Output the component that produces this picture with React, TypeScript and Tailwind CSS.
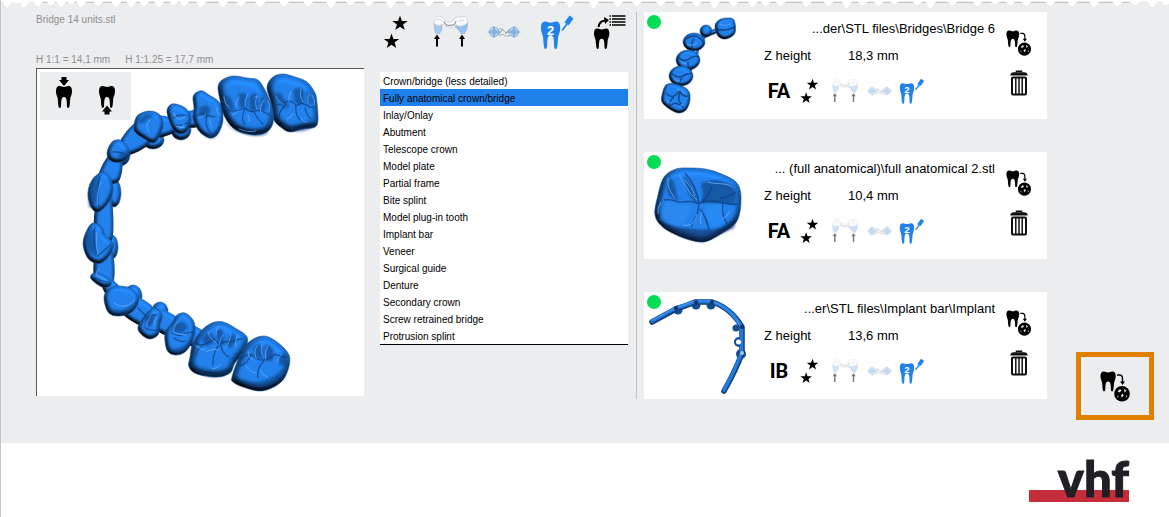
import { useState, type ReactNode } from "react";

type Pt = [number, number];

function smooth(points: Pt[]): string {
  const n = points.length;
  let d = `M${points[0][0]} ${points[0][1]}`;
  for (let i = 0; i < n; i++) {
    const a = points[(i - 1 + n) % n];
    const b = points[i];
    const c = points[(i + 1) % n];
    const e = points[(i + 2) % n];
    d += `C${b[0] + (c[0] - a[0]) / 6} ${b[1] + (c[1] - a[1]) / 6} ${c[0] - (e[0] - b[0]) / 6} ${c[1] - (e[1] - b[1]) / 6} ${c[0]} ${c[1]}`;
  }
  return d + "Z";
}

function ellipse(cx: number, cy: number, rx: number, ry: number): Pt[] {
  return Array.from({ length: 8 }, (_, i): Pt => {
    const t = (i * Math.PI) / 4;
    return [cx + rx * Math.cos(t), cy + ry * Math.sin(t)];
  });
}

function Lighting({ id, soft }: { id: string; soft: number }) {
  return (
    <>
      <filter id={id} x="-10%" y="-10%" width="120%" height="120%" colorInterpolationFilters="sRGB">
        <feGaussianBlur in="SourceAlpha" stdDeviation={soft} result="b" />
        <feDiffuseLighting in="b" surfaceScale={soft * 2.4} diffuseConstant="1.1" lightingColor="#2282ef" result="l">
          <feDistantLight azimuth="290" elevation="64" />
        </feDiffuseLighting>
        <feComposite in="l" in2="SourceAlpha" operator="in" />
      </filter>
      <filter id={`${id}-haze`} x="-5%" y="-5%" width="110%" height="110%">
        <feGaussianBlur stdDeviation="0.9" />
      </filter>
      <filter id={`${id}-soft`} x="-5%" y="-5%" width="110%" height="110%">
        <feGaussianBlur stdDeviation="0.45" />
      </filter>
    </>
  );
}

function Blobs({ shapes, filter }: { shapes: Pt[][]; filter: string }) {
  return (
    <g stroke="#17529d" strokeWidth="0.6">
      {shapes.map((s, i) => (
        <g key={i}>
          <path d={smooth(s)} fill="#2484f2" stroke="none" filter={`url(#${filter})`} />
          <path d={smooth(s)} fill="none" />
        </g>
      ))}
    </g>
  );
}

const archConnectors: Pt[][] = [
  [[150, 117], [172, 118], [178, 130], [156, 137]],
  [[138, 122], [120, 142], [128, 155], [150, 142]],
  [[109, 155], [122, 160], [118, 182], [98, 180]],
  [[97, 200], [111, 196], [112, 240], [95, 234]],
  [[96, 252], [112, 250], [113, 284], [95, 281]],
  [[104, 274], [122, 290], [112, 302], [101, 284]],
  [[126, 293], [154, 308], [149, 328], [122, 313]],
  [[158, 309], [180, 320], [174, 337], [153, 327]],
  [[185, 324], [204, 332], [198, 347], [185, 341]],
  [[182, 114], [200, 110], [200, 126], [182, 126]],
];

const archBack: Pt[][] = [
  ellipse(153, 140, 11, 9),
  ellipse(181, 130, 10, 10),
  ellipse(114, 193, 7, 14),
  ellipse(112, 247, 6, 12),
  ellipse(133, 296, 9, 11),
  ellipse(160, 311, 8, 9),
  ellipse(120, 155, 10, 11),
];

const archFront: Pt[][] = [
  [[193, 97], [197, 92], [203, 91], [209, 95], [217, 100], [222, 107], [223, 117], [222, 125], [217, 135], [210, 138], [202, 134], [197, 128], [193, 118], [194, 108]],
  [[167, 110], [172, 104], [182, 106], [189, 112], [191, 121], [187, 131], [180, 134], [173, 129], [169, 120]],
  [[134, 125], [138, 115], [150, 111], [160, 115], [163, 125], [159, 137], [153, 143], [143, 138], [135, 132]],
  [[107, 153], [112, 142], [120, 140], [128, 147], [129, 156], [121, 162], [111, 161]],
  [[88, 193], [92, 180], [102, 172], [110, 177], [113, 190], [108, 203], [98, 212], [91, 207]],
  [[83, 243], [87, 230], [93, 223], [102, 227], [105, 235], [113, 243], [111, 253], [103, 262], [95, 263], [87, 257]],
  [[91, 275], [97, 273], [110, 279], [110, 286], [102, 287], [92, 280]],
  [[104, 297], [110, 288], [120, 286], [132, 289], [139, 299], [132, 312], [118, 316], [108, 312]],
  [[138, 327], [146, 314], [154, 308], [162, 314], [160, 325], [158, 335], [150, 339], [142, 335]],
  [[165, 333], [172, 323], [177, 315], [185, 313], [193, 320], [195, 330], [192, 342], [185, 352], [175, 355], [167, 350]],
];

const archMolars: Pt[][] = [
  [[267, 87], [273, 77], [283, 74], [295, 77], [307, 82], [315, 93], [317, 103], [318, 120], [315, 127], [303, 129], [290, 132], [282, 128], [274, 120], [271, 103]],
  [[218, 87], [222, 80], [233, 76], [247, 78], [258, 80], [265, 90], [269, 99], [273, 110], [273, 123], [267, 132], [255, 135], [240, 132], [230, 125], [223, 113], [220, 100]],
  [[190, 357], [193, 343], [202, 330], [212, 323], [223, 322], [235, 328], [247, 337], [245, 350], [235, 363], [230, 373], [217, 377], [197, 374], [189, 367]],
  [[232, 377], [238, 360], [248, 343], [263, 336], [277, 342], [289, 355], [288, 370], [280, 383], [262, 391], [243, 387], [233, 382]],
];

function ArchModel() {
  return (
    <svg viewBox="37 69 327 327" className="block h-auto w-full" role="img" aria-label="Bridge 14 units">
      <defs>
        <Lighting id="arch" soft={2.2} />
        <Lighting id="molar" soft={3.6} />
      </defs>
      <Blobs shapes={archBack} filter="arch" />
      <path d={archConnectors.map(smooth).join("")} fill="#2484f2" filter="url(#arch)" />
      <Blobs shapes={archFront} filter="arch" />
      <Blobs shapes={archMolars} filter="molar" />
      <g fill="#0f3f7f" opacity="0.6" filter="url(#arch-haze)">
        <path d="M274 95q5-6 9 2l6 9q-4 4-7 1zM293 90q9-5 11 1l0 12q-7 3-9-1zM306 90q6 4 6 13l-5 2zM223 97q6-4 8 2l4 10q-5 2-8-2zM238 94q7-3 9 2l0 12q-5 1-7-1zM249 98q6-9 9-2l0 13q-6 4-8 1zM261 94q7 8 4 17l-5 1zM199 108q8-6 11 1l-1 7q-6 2-10-1zM202 340q5-11 11-5l2 6q-6 6-10 5zM216 331q6-5 7 1l2 11q-5 4-7 2zM231 333q7 1 5 7l-5 8-5-3zM253 347q8-5 10 1l1 11q-9-1-10-4zM265 344q8 1 8 7l0 9q-6 2-7 0zM279 355q7-5 8 3l-1 8q-6 0-7-3zM90 193q0-12 10-17l-4 30zM85 242q0-8 9-13l3 28-8-5zM138 123c4-10 12-11 16-7-8 2-10 9-16 7zM118 157q3-7 10-6l-5 8zM145 320q5-8 10-3l-3 8-6 3zM171 331q5-12 14-8l3 5-8 6z" />
        <path d="M221 118c10 13 27 17 48 14-7 8-36 4-48-14zM275 119c11 12 27 9 40 6-6 8-28 11-40-6zM190 362c9 12 25 13 40 8-5 11-36 10-40-8zM233 377c15 9 34 7 50-8-6 18-26 26-50 8zM167 345c7 7 16 3 24-5-3 14-20 18-24 5zM107 306c10 8 20 4 28-4-5 14-22 17-28 4zM89 208q7 1 10-30-10 10-11 18zM195 128q12 12 26-1-6 16-14 10z" />
      </g>
      <g fill="none" stroke="#0f3d7c" strokeWidth="1.2" opacity="0.75" strokeLinecap="round" filter="url(#arch-soft)">
        <path d="M273 105q7 0 13-3t10 4q5-4 10-1 5 4 9 1M296 105q-1 10 4 15M284 107q-5 5-5 11M305 107q1 8 6 12M223 107q6 5 12 4t10-3q5 5 10 3t14 4M245 108q-5 12 0 16M254 112q4 8 9 12M196 116q6-4 9-2t10 3M207 116q-3 9 3 16M173 118q7-5 14-2M176 125q6 1 11-2" />
        <path d="M194 342q6 4 11 2t9-5q5 6 8 4t11-1q6-4 10-3M221 343q-9 9-8 22M221 345q1 9 8 12M205 344q-8 4-9 12M239 359q8-4 12-5 7 7 13 6t11-6q5 3 12 3M264 361q-8 8-6 17M251 355q-3 8-11 11M172 333q8 4 10 2t11-3M174 338q6 5 12 3M147 319q5-5 10-4M145 328q8 4 14 1M100 176q-4 14-1 31M95 227q-3 15 3 29l12-11M94 277q6 4 13 5M112 152q8-1 16 3M138 308q6 6 9 9" />
      </g>
      <g fill="none" stroke="#7dbaff" strokeWidth="0.8" opacity="0.8" strokeLinecap="round">
        <path d="M276 96q2 6 7 8M291 92q-3 5-2 9M301 89q-2 7 2 13M309 94q-2 4-1 9M312 95q4 6 2 11M287 119q5-2 6-5M301 118q3 5 6 4M224 97q1 8 5 10M239 97q-4 5-3 10M248 94q-4 6-3 13M254 98q3-4 4-1M257 96q-3 8 0 13M264 100q-5 7-3 13M268 101q3 5 1 10M232 115q4-1 6-4M248 115q2 3 1 6M239 129q9 4 17 2M217 108q-1 5 3 7M199 118q5-1 7-4M210 119q-1 5 2 8M174 113q1 5 4 6t8-3M176 126q5 3 9 1M150 120q-6 6-1 12M180 128q3 0 4-4" />
        <path d="M196 346q5 4 9 4M208 332q2 8 8 10M219 326q-4 5-3 9M223 335q-4 6-4 10M231 333q-1 10-6 15M238 335q-4 7-2 12M206 352q7-4 12-2M212 369q7-1 9-5M248 351q0 6 4 8M257 346q-4 6-1 12M262 345q-2 7 1 12M268 346q-4 7-2 13M282 354q-5 4-5 8M246 366q5 7 10 7M261 370q1 5 6 7M178 321q-6 7-4 12l12 2M151 316q-5 6-4 11M157 317q-4 4-3 8M114 303c9 6 15 3 21-3M101 182q-5 12-3 22M97 232q-2 12 1 23M99 269q-4 3-2 6l9 5" />
      </g>
    </svg>
  );
}

const bridgeSixShapes: Pt[][] = [
  [[683, 82], [688, 66], [696, 52], [702, 36], [718, 28], [716, 33], [703, 40], [696, 60], [688, 78]],
  [[715, 26], [719, 20], [727, 18], [734, 20], [735, 33], [726, 39], [718, 36]],
  ellipse(706, 31, 6, 6),
  ellipse(694, 42, 11, 9),
  ellipse(688, 60, 12, 10),
  ellipse(681, 76, 12, 10),
  [[662, 95], [666, 85], [676, 84], [688, 90], [690, 100], [686, 110], [678, 113], [668, 108], [662, 102]],
];

function BridgeSixModel() {
  return (
    <svg viewBox="644 12 106 107" className="block h-[107px] w-[106px]" role="img" aria-label="Bridge 6">
      <defs>
        <Lighting id="six" soft={1.8} />
      </defs>
      <Blobs shapes={bridgeSixShapes} filter="six" />
      <g fill="none" stroke="#0d3567" strokeWidth="1.5" opacity="0.75" filter="url(#six-soft)">
        <path d="M716 29q9 3 19-2M686 39q7-5 12-2t6 8M694 38q-4 7-1 12M678 57q6 6 11 2t10-2M688 62q-1 5 3 7M671 73q7 6 12 3t8-2M682 78q-4 5-1 8M666 93q5 5 8 3t6-5q2 6 8 5M674 97q-6 5-4 9 5-4 8-2t6 4M680 92q-3 8 1 12" />
      </g>
      <g fill="none" stroke="#5aa5fb" strokeWidth="0.9">
        <path d="M719 24q6 3 12 0M687 44q6 3 10-1M681 62q3 2 6 2M674 79q3 3 6 2M667 100q2 3 4 3M677 89q4 1 7 4M678 107q4 0 5-3" />
      </g>
    </svg>
  );
}

const crownShapes: Pt[][] = [
  [[655, 215], [658, 195], [664, 177], [676, 169], [690, 168], [705, 169], [719, 173], [736, 182], [741, 197], [737, 221], [719, 235], [703, 242], [684, 238], [664, 228]],
];

function CrownModel() {
  return (
    <svg viewBox="644 152 106 107" className="block h-[107px] w-[106px]" role="img" aria-label="Full anatomical crown">
      <defs>
        <Lighting id="crown" soft={3.4} />
      </defs>
      <Blobs shapes={crownShapes} filter="crown" />
      <g filter="url(#crown-haze)">
        <path d="M656 217c9 10 27 11 37 12 17 2 33 1 43-8l-2 7-15 7-16 7-19-4-20-10z" fill="#0c3165" opacity="0.65" />
        <path d="M671 178c6 6 3 14 8 22-7 0-14-6-11-17zM684 176c7 7 12 14 14 28-8-4-12-16-14-28zM701 184c9-5 20-5 31 1 6 8 4 14 3 19l-34-1q3-7 0-19z" fill="#12498c" opacity="0.75" />
        <path d="M668 202q10 3 24 2-1 10-9 20-14 3-24-5z" fill="#3490f6" opacity="0.5" />
        <path d="M704 207q10-5 19-3l2 19q-14 7-16 0z" fill="#2a8cf7" opacity="0.7" />
      </g>
      <path d="M664 200c8-2 12 3 19 2s11-1 16 2c5-4 10-3 20-2s13 4 18 2M699 204c-1-11-6-22-14-31M699 204q9-6 13-17M699 204c-1 10-4 16-8 22M723 204c-2 10 2 16 4 20M700 209c5 7 8 13 9 22M736 192q-8 6-16 6" fill="none" stroke="#0e3c7c" strokeWidth="1.4" opacity="0.75" filter="url(#crown-soft)" />
      <path d="M668 178c-1 9 3 15 7 20M679 175c6 10 10 18 18 25M685 180q8 8 10 16M708 182c9 3 18 0 24 5M683 225c9 2 12-3 14-11M702 212q-3 7-1 12M722 219q5-2 8-8M661 202q-4 6-3 12" fill="none" stroke="#75b5fc" strokeWidth="1" opacity="0.75" filter="url(#crown-soft)" />
    </svg>
  );
}

function ImplantModel() {
  return (
    <svg viewBox="644 292 106 107" className="block h-[107px] w-[106px]" role="img" aria-label="Implant bar">
      <g fill="#164d90">
        <circle cx="678" cy="310" r="4.5" />
        <circle cx="696" cy="305" r="4.5" />
        <circle cx="711" cy="305" r="4.5" />
        <circle cx="736" cy="328" r="3.5" />
        <circle cx="739" cy="342" r="5" />
        <circle cx="741" cy="354" r="5" />
      </g>
      <g fill="none" strokeLinecap="round" strokeLinejoin="round">
        <path d="M652 322L676 309Q686 306 695 302L712 302Q731 308 742 327L742 353Q736 370 724 391" stroke="#123f79" strokeWidth="5.5" />
        <path d="M652 321L676 308Q686 305 695 301.500L712 301.500Q731 308 741.500 327L741.500 353Q735 370 724 390" stroke="#2379dc" strokeWidth="3.600" />
        <path d="M653 320L676 307.500Q686 304 695 301L711 301Q730 307 740 325" stroke="#549ff4" strokeWidth="0.800" />
      </g>
      <g fill="#0d2f5d">
        <circle cx="676" cy="308" r="2" />
        <circle cx="696" cy="302" r="2" />
        <circle cx="712" cy="302" r="2" />
        <circle cx="742" cy="327" r="2" />
      </g>
      <circle cx="738.500" cy="342" r="2.500" fill="#fff" />
      <circle cx="742" cy="353" r="2" fill="#a9c8ee" />
    </svg>
  );
}

const TOOTH =
  "M3.500 0C5.500 0 6 1 8 1S10.500 0 12.500 0C15 0 16 2 16 5C16 9 14.600 10 14.200 13C13.900 17 13.800 22 12.300 22C10.600 22 11 19 10.800 16C10.600 12.500 9.700 11 8 11S5.400 12.500 5.200 16C5 19 5.400 22 3.700 22C2.200 22 2.100 17 1.800 13C1.400 10 0 9 0 5C0 2 1 0 3.500 0Z";

const STAR = "M0-8L1.900-2.600L7.700-2.500L3.100 1L4.700 6.500L0 3.200L-4.700 6.500L-3.100 1L-7.700-2.500L-1.900-2.600Z";

type IconProps = { small?: boolean };

function ToolSvg({ left, small, children }: { left: number; small?: boolean; children: ReactNode }) {
  return (
    <svg viewBox={`${left} 12 36 40`} className={small ? "block h-[30px] w-[27px]" : "block h-10 w-9"} aria-hidden="true">
      {children}
    </svg>
  );
}

function StarsIcon({ small }: IconProps) {
  return (
    <ToolSvg left={378} small={small}>
      <path d={STAR} transform="translate(400 23.500)" />
      <path d={STAR} transform="translate(391.500 41.500)" />
    </ToolSvg>
  );
}

function PillarIcon({ small }: IconProps) {
  return (
    <ToolSvg left={433} small={small}>
      <path d="M435.300 23L443 25Q443 31 440.500 33.500L437 33.500Q434.500 28 435.300 23Z" fill="#a5c8f1" stroke="#87a9d2" strokeWidth="0.600" />
      <path d="M456.500 24L468.700 23Q468.500 30 465.500 33.500L462 33.500Q459.500 29 456 26.500Z" fill="#98c1f0" stroke="#87a9d2" strokeWidth="0.600" />
      <path d="M435 23Q436 16 441 16Q445 17 445.500 20Q448 23 452 22Q455 20 456.500 18Q460 16 463 17Q468 15 468.500 20L468.500 23Q463 28 457 25Q454 29 450 27Q446 28 444 24Q440 27 435 24Z" fill="#f8f9fa" stroke="#c8cbce" strokeWidth="0.700" />
      <path d="M445 21.500Q447 27 452 25Q456 26 457 21" fill="none" stroke="#94989b" strokeWidth="1.200" />
      <path d="M438 20Q441 18 443 21M460 21L465 20" fill="none" stroke="#cfd2d4" strokeWidth="1" />
      <path d="M438 34.500L441 39H439V46.500H437V39H435ZM463 34.500L466 39H464V46.500H462V39H460Z" />
    </ToolSvg>
  );
}

function ConnectorIcon({ small }: IconProps) {
  return (
    <ToolSvg left={487} small={small}>
      <path d="M498 32Q501 26 505 31Q509 35 512 31L512 35Q507 38 504 34Q501 37 498 34Z" fill="#eceef0" stroke="#a6aaad" strokeWidth="1" />
      <path d="M500 34L504 29M506 34L511 29" stroke="#8d9194" strokeWidth="1" />
      {[495, 515].map((x) => (
        <g key={x} fill="none" stroke="#6f9fd2">
          <circle cx={x} cy="32" r="4.800" fill="#bad6f2" strokeWidth="0.700" />
          <circle cx={x} cy="32" r="2.300" strokeWidth="1" />
          <path d={`M${x - 6.5} 32H${x + 6.5}M${x} 26V38`} strokeWidth="0.900" />
        </g>
      ))}
    </ToolSvg>
  );
}

function ShadeIcon({ small }: IconProps) {
  return (
    <ToolSvg left={539} small={small}>
      <g fill="#2281ea">
        <path d={TOOTH} transform="translate(540 21.500) scale(1.200 1.250)" />
        <path d="M561 30.500L566 24" stroke="#2281ea" strokeWidth="1.700" />
        <path d="M568.500 15.500L572.500 18.500L567.500 25.500L563.500 22.500Z" />
      </g>
      <text x="549.500" y="35" textAnchor="middle" fill="#fff" className="font-['Liberation_Sans'] text-[13px] font-bold">
        2
      </text>
    </ToolSvg>
  );
}

function ToothListIcon() {
  return (
    <ToolSvg left={593}>
      <path d={TOOTH} transform="translate(593 28.500) scale(0.960 0.930)" />
      <path d="M597.500 27Q598.500 21 604 20.500" fill="none" stroke="#000" strokeWidth="2" />
      <path d="M603 17L608 20L604 24Z" />
      <path d="M611 16H624.500M611 19H624.500M611 22H624.500M611 25H624.500" stroke="#000" strokeWidth="1.300" />
      <path d="M608.500 16H610M608.500 19H610M608.500 22H610M608.500 25H610" stroke="#000" strokeWidth="1.300" />
    </ToolSvg>
  );
}

function ToMachineIcon({ className }: { className: string }) {
  return (
    <svg viewBox="0 0 31 31" className={className} aria-hidden="true">
      <path d={TOOTH} transform="translate(0.500 0.500) scale(0.950 0.910)" />
      <path d="M17 4H20Q22.500 4.300 22.500 8V11" fill="none" stroke="#000" strokeWidth="1.400" />
      <path d="M20 10.500H25L22.500 14Z" />
      <circle cx="22" cy="22.800" r="7.800" />
      <path d="M17.500 20.500L20 18L21.500 19.500L19.500 21.500ZM24 17.800L26.500 19.800L24.500 21.500ZM21 24L23 22.500L23.500 25L21.500 26.500ZM17 24.500L18.500 25.500L18 27ZM26 24.500L27.500 25L26 26.500Z" fill="#dfe1e3" />
    </svg>
  );
}

function TrashIcon() {
  return (
    <svg viewBox="0 0 18 26" className="block h-[26px] w-[18px]" aria-hidden="true" fill="none" stroke="#111">
      <path d="M6.500 2.500V1.200H11.500V2.500" strokeWidth="1.500" />
      <path d="M0.300 5.500Q0.500 2.300 4 2.300H14Q17.500 2.300 17.700 5.500Z" fill="#111" stroke="none" />
      <rect x="2" y="7.500" width="14" height="17" rx="1" strokeWidth="2" />
      <path d="M5.800 8V24M9 8V24M12.200 8V24" strokeWidth="1.500" />
    </svg>
  );
}

const tears: Pt[] = [
  [6, 7], [15, 3], [23, 7], [37, 6], [50, 5], [60, 7], [70, 4], [80, 7], [97, 6], [115, 7], [130, 7], [143, 6], [158, 7], [173, 5],
  [183, 6], [200, 7], [222, 7], [240, 6], [259, 7], [283, 6], [307, 6], [330, 8], [350, 5], [368, 6], [390, 8], [408, 6], [428, 6],
  [447, 7], [466, 6], [481, 6], [498, 8], [515, 5], [533, 6], [552, 6], [569, 7], [593, 8], [617, 7], [636, 6], [660, 6], [678, 7],
  [696, 6], [714, 8], [733, 6], [752, 7], [765, 6], [780, 6], [806, 7], [828, 6], [846, 8], [862, 5], [878, 6], [894, 4], [917, 5],
  [930, 8], [952, 5], [977, 6], [995, 4], [1010, 5], [1026, 6], [1050, 6], [1072, 6], [1094, 7], [1117, 6], [1135, 5], [1152, 7], [1166, 5],
];

function TornEdge() {
  return (
    <svg viewBox="0 0 1169 10" preserveAspectRatio="none" className="absolute inset-x-0 top-0 h-[10px] w-full" aria-hidden="true">
      <path d="M36 2.500H1129" stroke="#c3c5c7" />
      <path d={"M0 0V2" + tears.map(([x, y]) => `L${x - 5} 1L${x - 1} ${y}L${x + 1} ${y}L${x + 6} 1`).join("") + "L1169 2V0Z"} fill="#fff" />
    </svg>
  );
}

const indications = [
  "Crown/bridge (less detailed)",
  "Fully anatomical crown/bridge",
  "Inlay/Onlay",
  "Abutment",
  "Telescope crown",
  "Model plate",
  "Partial frame",
  "Bite splint",
  "Model plug-in tooth",
  "Implant bar",
  "Veneer",
  "Surgical guide",
  "Denture",
  "Secondary crown",
  "Screw retrained bridge",
  "Protrusion splint",
];

type Job = { file: string; height: string; kind: string; model: ReactNode };

const jobs: Job[] = [
  { file: "...der\\STL files\\Bridges\\Bridge 6", height: "18,3 mm", kind: "FA", model: <BridgeSixModel /> },
  { file: "... (full anatomical)\\full anatomical 2.stl", height: "10,4 mm", kind: "FA", model: <CrownModel /> },
  { file: "...er\\STL files\\Implant bar\\Implant", height: "13,6 mm", kind: "IB", model: <ImplantModel /> },
];

function JobCard({ job }: { job: Job }) {
  return (
    <article className="relative flex h-[107px] bg-white">
      <span className="absolute top-[3px] left-[3px] size-[14px] rounded-full bg-[#00dd55]" />
      <div className="w-[106px] shrink-0">{job.model}</div>
      <div className="flex min-w-0 flex-1 flex-col pt-2 pl-[14px]">
        <p className="text-right leading-[18px] whitespace-nowrap">{job.file}</p>
        <dl className="mt-2 flex leading-5">
          <dt className="w-[84px]">Z height</dt>
          <dd>{job.height}</dd>
        </dl>
        <div className="mt-[10px] flex items-center">
          <span className="w-[30px] text-center font-['Roboto'] text-[20px] leading-[30px] font-bold">{job.kind}</span>
          <button type="button" aria-label="Quality" className="ml-[2px]"><StarsIcon small /></button>
          <button type="button" aria-label="Connectors to pillars" className="ml-2 opacity-50"><PillarIcon small /></button>
          <button type="button" aria-label="Connector positions" className="ml-2 opacity-50"><ConnectorIcon small /></button>
          <button type="button" aria-label="Shade" className="ml-[6px]"><ShadeIcon small /></button>
        </div>
      </div>
      <div className="flex w-[52px] shrink-0 flex-col items-center pt-[18px] pr-1">
        <button type="button" aria-label="Send to machine"><ToMachineIcon className="block size-[26px]" /></button>
        <button type="button" aria-label="Delete" className="mt-[14px]"><TrashIcon /></button>
      </div>
    </article>
  );
}

export default function App() {
  const [selected, setSelected] = useState(1);
  return (
    <div className="min-h-screen border-l border-[#c3c5c7] bg-white font-['Liberation_Sans',Arial,sans-serif] text-[13px] text-black">
      <main className="relative flex items-start bg-[#ebedef] pt-3 pr-[15px] pb-[44px] pl-[35px]">
        <TornEdge />
        <section className="w-[328px] shrink-0 text-[10px] leading-4 text-[#8f8f8f]">
          <h1>Bridge 14 units.stl</h1>
          <p className="mt-6 flex gap-[15px]">
            <span>H 1:1 = 14,1 mm</span>
            <span>H 1:1.25 = 17,7 mm</span>
          </p>
          <div className="relative border-t border-l border-[#58595b] bg-white">
            <ArchModel />
            <div className="absolute top-[3px] left-[3px] flex h-12 w-[91px] bg-[#ebedef]">
              <button type="button" aria-label="Insert from above" className="w-12">
                <svg viewBox="40 72 48 48" className="block size-12" aria-hidden="true">
                  <path d={TOOTH} transform="translate(56 86)" />
                  <path d="M61.500 77H66.500V80H69L64 86L59 80H61.500Z" />
                </svg>
              </button>
              <button type="button" aria-label="Insert from below" className="w-[43px]">
                <svg viewBox="88 72 43 48" className="block h-12 w-[43px]" aria-hidden="true">
                  <path d={TOOTH} transform="translate(99 86)" />
                  <path d="M107 105.500L112 111.500H109.500V114.500H104.500V111.500H102Z" stroke="#ebedef" strokeWidth="2" paintOrder="stroke" />
                </svg>
              </button>
            </div>
          </div>
        </section>
        <section className="ml-4 w-[248px] shrink-0">
          <div className="-mx-[2px] flex justify-between">
            <button type="button" aria-label="Quality"><StarsIcon /></button>
            <button type="button" aria-label="Connectors to pillars"><PillarIcon /></button>
            <button type="button" aria-label="Connector positions"><ConnectorIcon /></button>
            <button type="button" aria-label="Shade"><ShadeIcon /></button>
            <button type="button" aria-label="Choose indication"><ToothListIcon /></button>
          </div>
          <div role="listbox" aria-label="Indication" className="mt-5 flex flex-col border-b border-black bg-white text-[10px]">
            {indications.map((name, i) => (
              <button
                key={name}
                type="button"
                role="option"
                aria-selected={i === selected}
                onClick={() => setSelected(i)}
                className={
                  i === selected
                    ? "h-[17px] bg-[#2080ea] pl-[3px] text-left leading-5"
                    : "h-[17px] pl-[3px] text-left leading-5"
                }
              >
                {name}
              </button>
            ))}
          </div>
        </section>
        <section className="ml-2 flex min-w-0 flex-1 flex-col gap-[33px] border-l border-[#bfc1c4] pl-[7px]">
          {jobs.map((job) => (
            <JobCard key={job.file} job={job} />
          ))}
        </section>
        <button
          type="button"
          aria-label="Send all to machine"
          className="-mb-[21px] ml-[29px] flex h-[68px] w-[78px] shrink-0 items-center justify-center self-end border-5 border-[#df8000]"
        >
          <ToMachineIcon className="block size-[31px]" />
        </button>
      </main>
      <footer className="flex justify-end pt-[47px] pr-10">
        <div className="relative h-3 w-[100px] bg-[#c52d3a]">
          <span className="absolute right-0 -bottom-[6px] font-['Lato'] text-[49px] leading-[60px] font-black text-[#211e26] [-webkit-text-stroke:1px_#211e26]">vhf</span>
        </div>
      </footer>
    </div>
  );
}
